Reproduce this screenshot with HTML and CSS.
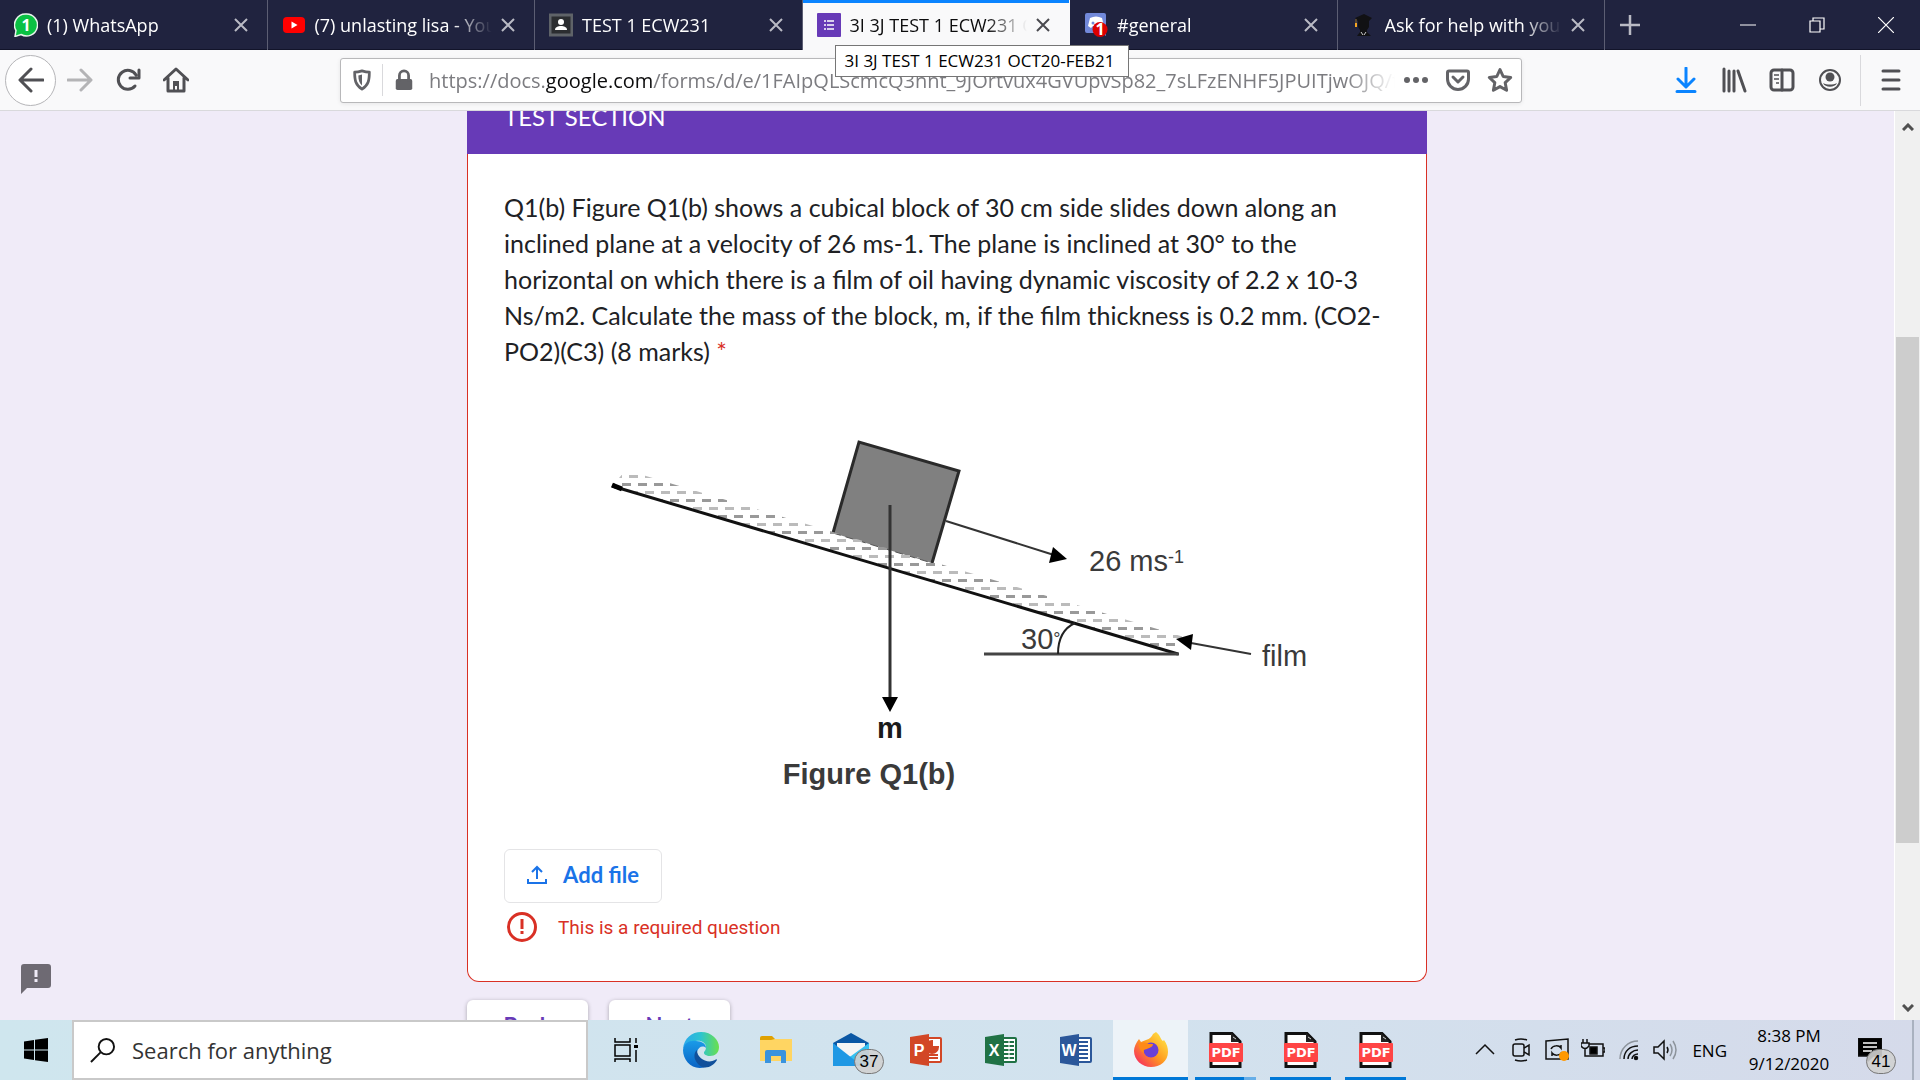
FILE: index.html
```html
<!DOCTYPE html>
<html lang="en">
<head>
    <meta charset="UTF-8">
    <meta name="viewport" content="width=device-width, initial-scale=1.0">
    <title>3I 3J TEST 1 ECW231 OCT20-FEB21</title>
    <link rel="stylesheet" href="styles.css">
</head>
<body>

    <svg class="sprite" width="0" height="0">
        <symbol id="cross" viewBox="0 0 14 14"><path d="M1 1l12 12M13 1L1 13" fill="none" stroke="currentColor" stroke-width="2"/></symbol>
        <symbol id="pdf" viewBox="0 0 36 36">
            <path d="M3 1.500h21l8 8v25H3z" fill="#fff" stroke="#111" stroke-width="3"/>
            <path d="M23 1v9h9z" fill="#222"/>
            <path d="M25 5l3 2" stroke="#ccc"/>
            <rect x="1" y="11" width="34" height="19" rx="1" fill="#ff4545"/>
            <text x="18" y="25" class="pdf-text">PDF</text>
        </symbol>
    </svg>

    <header class="tabs">
        <div class="tab">
            <svg class="tab-icon" viewBox="0 0 24 24">
                <path d="M12 1a11 11 0 1 1-5 20.500L1 23.500l1-6A11 11 0 0 1 12 1z" fill="#0ac143" stroke="#e8f5ec" stroke-width="1.500"/>
                <text x="12" y="18" class="wa-count">1</text>
            </svg>
            <span class="tab-title">(1) WhatsApp</span>
            <button class="tab-close" aria-label="Close tab"><svg><use href="#cross"/></svg></button>
        </div>
        <div class="tab">
            <svg class="tab-icon" viewBox="0 0 24 24">
                <rect x="1" y="4" width="22" height="16" rx="4" fill="#f00"/>
                <path d="M9.500 8.500v7l6-3.500z" fill="#fff"/>
            </svg>
            <span class="tab-title">(7) unlasting lisa - YouTube</span>
            <button class="tab-close" aria-label="Close tab"><svg><use href="#cross"/></svg></button>
        </div>
        <div class="tab">
            <svg class="tab-icon" viewBox="0 0 24 24">
                <rect x="1" y="2" width="22" height="20" fill="#2b2d30" stroke="#5f6368" stroke-width="3"/>
                <circle cx="12" cy="9" r="3" fill="#fff"/>
                <path d="M6 17c0-3 3-4 6-4s6 1 6 4z" fill="#fff"/>
            </svg>
            <span class="tab-title">TEST 1 ECW231</span>
            <button class="tab-close" aria-label="Close tab"><svg><use href="#cross"/></svg></button>
        </div>
        <div class="tab active">
            <svg class="tab-icon" viewBox="0 0 24 24">
                <rect width="24" height="24" rx="1" fill="#673ab7"/>
                <path d="M7 8h2M7 12h2M7 16h2M10 8h7M10 12h7M10 16h7" stroke="#fff" stroke-width="1.500"/>
            </svg>
            <span class="tab-title">3I 3J TEST 1 ECW231 OCT20-FEB21</span>
            <button class="tab-close" aria-label="Close tab"><svg><use href="#cross"/></svg></button>
            <div class="tooltip">3I 3J TEST 1 ECW231 OCT20-FEB21</div>
        </div>
        <div class="tab">
            <svg class="tab-icon" viewBox="0 0 24 24">
                <path d="M3 0h17a2 2 0 0 1 2 2v21l-4-3H3a2 2 0 0 1-2-2V2a2 2 0 0 1 2-2z" fill="#7289da"/>
                <path d="M6 5c4-2 8-2 12 0l2 8-4 2-2-2h-5l-2 2-3-2z" fill="#fff"/>
                <circle cx="9" cy="10" r="1.500" fill="#7289da"/>
                <circle cx="16" cy="16.500" r="7.500" fill="#d00"/>
                <text x="16" y="22" class="dc-count">1</text>
            </svg>
            <span class="tab-title">#general</span>
            <button class="tab-close" aria-label="Close tab"><svg><use href="#cross"/></svg></button>
        </div>
        <div class="tab">
            <svg class="tab-icon" viewBox="0 0 24 24">
                <path d="M3 5l9-4 8 4-3 3v6l-2 3v2l4 4H5l3-4v-2l-2-3V8z" fill="#111114"/>
                <path d="M4 6v4" stroke="#8a6a2a"/>
                <path d="M4 10v4" stroke="#f5a623" stroke-width="2"/>
                <path d="M9 19l2 3M14 19l-2 3" stroke="#ccc"/>
            </svg>
            <span class="tab-title">Ask for help with your homework</span>
            <button class="tab-close" aria-label="Close tab"><svg><use href="#cross"/></svg></button>
        </div>
        <button class="new-tab" aria-label="New tab"><svg viewBox="0 0 22 22"><path d="M11 1v20M1 11h20" stroke="currentColor" stroke-width="2.500"/></svg></button>
        <div class="window-buttons">
            <button aria-label="Minimize"><svg viewBox="0 0 16 16"><path d="M0 8h16" stroke="#fff"/></svg></button>
            <button aria-label="Restore"><svg viewBox="0 0 16 16"><path d="M1 4h10v11H1zM4 4V1h11v11h-4" fill="none" stroke="#fff" stroke-width="1.200"/></svg></button>
            <button aria-label="Close"><svg viewBox="0 0 16 16"><path d="M0 0l16 16M16 0L0 16" stroke="#fff" stroke-width="1.200"/></svg></button>
        </div>
    </header>

    <nav class="toolbar">
        <button class="back" aria-label="Back"><svg viewBox="0 0 26 26"><path d="M25 13H3M13 2L2 13l11 11" class="line"/></svg></button>
        <button class="tool disabled" aria-label="Forward"><svg viewBox="0 0 26 26"><path d="M1 13h22M14 3l10 10-10 10" class="line"/></svg></button>
        <button class="tool" aria-label="Reload"><svg viewBox="0 0 26 26"><path d="M20 19a9.500 9.500 0 1 1 1-11M24 3v8h-9" class="line"/></svg></button>
        <button class="tool" aria-label="Home"><svg viewBox="0 0 26 26"><path d="M1 13L13 2l12 11M5 11v13h16V11" class="line"/><path d="M10 14h6v10h-2v-5h-2v5h-2z" fill="currentColor"/></svg></button>

        <div class="urlbar">
            <button class="shield" aria-label="Tracking protection"><svg viewBox="0 0 24 24"><path d="M12 2c3 1 5 1.500 8 1.500 0 9-1 14-8 18.500C5 17.500 4 12.500 4 3.500 7 3.500 9 3 12 2z" class="line"/><path d="M12 6v12c-3-3-4-6-4-11z" fill="currentColor"/></svg></button>
            <button class="lock" aria-label="Site information"><svg viewBox="0 0 24 24"><rect x="3" y="11" width="18" height="12" rx="2" fill="currentColor"/><path d="M7 12V7a5 5 0 0 1 10 0v5" class="line"/></svg></button>
            <div class="url" role="textbox" aria-label="Address" contenteditable spellcheck="false">https://docs.<b>google.com</b>/forms/d/e/1FAIpQLScmcQ3nnt_9JOrtvux4GVUpvSp82_7sLFzENHF5JPUITjwOJQ/formResponse</div>
            <button aria-label="Page actions"><svg viewBox="0 0 26 26"><circle cx="4" cy="13" r="3" fill="currentColor"/><circle cx="13" cy="13" r="3" fill="currentColor"/><circle cx="22" cy="13" r="3" fill="currentColor"/></svg></button>
            <button aria-label="Save to Pocket"><svg viewBox="0 0 26 26"><path d="M4 4h18a1.500 1.500 0 0 1 1.500 1.500V12a10.500 10.500 0 0 1-21 0V5.500A1.500 1.500 0 0 1 4 4zM8 10l5 5 5-5" class="line"/></svg></button>
            <button aria-label="Bookmark"><svg viewBox="0 0 26 26"><path d="M13 2.500l3.200 7 7.500 1-5.500 5.200 1.400 7.600L13 19.600l-6.600 3.700 1.400-7.600-5.500-5.200 7.500-1z" class="line"/></svg></button>
        </div>

        <button class="tool download" aria-label="Downloads"><svg viewBox="0 0 26 26"><path d="M13 1v18M5 12l8 8 8-8M4 24.500h18" class="line"/></svg></button>
        <button class="tool" aria-label="Library"><svg viewBox="0 0 26 26"><path d="M3 2v22M8 4v20M13 4v20M17 4l7 20" class="line"/></svg></button>
        <button class="tool" aria-label="Sidebars"><svg viewBox="0 0 26 26"><rect x="2" y="3" width="22" height="20" rx="3" class="line"/><path d="M13 3v20" class="line"/><path d="M5 8h5M5 12h5M7 16h3" stroke="currentColor" stroke-width="1.500"/></svg></button>
        <button class="tool" aria-label="Account"><svg viewBox="0 0 26 26"><circle cx="13" cy="13" r="10" fill="none" stroke="currentColor" stroke-width="2"/><circle cx="13" cy="10" r="4.500" fill="currentColor"/><path d="M6 16c4 2 10 2 14 0-2 5-12 5-14 0z" fill="currentColor"/></svg></button>
        <button class="tool menu" aria-label="Menu"><svg viewBox="0 0 26 26"><path d="M5 4h16M5 13h16M5 22h16" class="line"/></svg></button>
    </nav>

    <div class="viewport">
        <main>
            <form>
                <section class="card">
                    <h2>TEST SECTION</h2>
                    <div class="question">
                        <p class="question-text">
                            Q1(b) Figure Q1(b) shows a cubical block of 30 cm side slides down along an<br>
                            inclined plane at a velocity of 26 ms-1. The plane is inclined at 30° to the<br>
                            horizontal on which there is a film of oil having dynamic viscosity of 2.2 x 10-3<br>
                            Ns/m2. Calculate the mass of the block, m, if the film thickness is 0.2 mm. (CO2-<br>
                            PO2)(C3) (8 marks) <span class="required">*</span>
                        </p>

                        <svg class="figure" viewBox="0 0 886 400" role="img" aria-label="Block sliding on an inclined plane">
                            <defs>
                                <pattern id="film" x="6" y="73" width="16" height="16" patternUnits="userSpaceOnUse">
                                    <rect x="0" y="0" width="9" height="3" fill="#999"/>
                                    <rect x="7" y="8" width="9" height="3" fill="#bbb"/>
                                </pattern>
                            </defs>
                            <path d="M355 32l100 29-27 92-99-30z" fill="#808080"/>
                            <path d="M329 123l26-91 100 29-27 92" fill="none" stroke="#2a2a2a" stroke-width="3"/>
                            <path d="M329 123l99 30" stroke="#555" stroke-dasharray="8 5"/>
                            <path d="M122 60l558 167-12 14L108 76z" fill="url(#film)"/>
                            <path d="M108 76l566 168" stroke="#111" stroke-width="3"/>
                            <path d="M108 75l10 4" stroke="#000" stroke-width="5"/>
                            <path d="M386 95v195" stroke="#333" stroke-width="3"/>
                            <path d="M378 287h16l-8 15z"/>
                            <path d="M442 111l108 34" stroke="#333" stroke-width="2"/>
                            <path d="M563 149l-14-12-4 16z"/>
                            <path d="M480 244h195" stroke="#444" stroke-width="3"/>
                            <path d="M554 244c0-16 6-26 17-31" fill="none" stroke="#222" stroke-width="2"/>
                            <path d="M747 244l-60-11" stroke="#333" stroke-width="2"/>
                            <path d="M672 229l17-5-2 16z"/>
                            <text x="585" y="161">26 ms<tspan class="sup" dy="-8">-1</tspan></text>
                            <text x="517" y="239">30<tspan class="sup" dy="-4">°</tspan></text>
                            <text x="758" y="256">film</text>
                            <text x="386" y="328" class="bold dark">m</text>
                            <text x="365" y="374" class="bold">Figure Q1(b)</text>
                        </svg>

                        <button type="button" class="add-file">
                            <svg viewBox="0 0 20 20"><path d="M10 14V3M5 7l5-5 5 5M1 14v4h18v-4" fill="none" stroke="currentColor" stroke-width="2"/></svg>
                            Add file
                        </button>
                        <div class="error">
                            <svg viewBox="0 0 30 30"><circle cx="15" cy="15" r="13.500" fill="none" stroke="currentColor" stroke-width="3"/><path d="M15 7v10M15 19v3" stroke="currentColor" stroke-width="3"/></svg>
                            This is a required question
                        </div>
                    </div>
                </section>
                <div class="form-buttons">
                    <button type="button">Back</button>
                    <button type="button">Next</button>
                </div>
            </form>
            <button class="report" aria-label="Report a problem"><svg viewBox="0 0 30 30"><path d="M3 0h24a3 3 0 0 1 3 3v18a3 3 0 0 1-3 3H6l-6 6V3a3 3 0 0 1 3-3z" fill="#6e6a73"/><path d="M15 6v7M15 15v3" stroke="#f0ebf8" stroke-width="3"/></svg></button>
        </main>
        <div class="scrollbar">
            <svg viewBox="0 0 12 8"><path d="M1 7l5-5 5 5" fill="none" stroke="#505050" stroke-width="3"/></svg>
            <div class="track"><div class="thumb"></div></div>
            <svg viewBox="0 0 12 8"><path d="M1 1l5 5 5-5" fill="none" stroke="#505050" stroke-width="3"/></svg>
        </div>
    </div>

    <footer class="taskbar">
        <button class="start" aria-label="Start"><svg viewBox="0 0 24 24"><path d="M0 3.500l10-1.500v9.500H0zM11 1.800L24 0v11.500H11zM0 12.500h10V22L0 20.500zM11 12.500h13V24l-13-1.800z"/></svg></button>
        <label class="search">
            <svg viewBox="0 0 26 26"><circle cx="17" cy="9" r="8" fill="none" stroke="#111" stroke-width="2"/><path d="M11 15L1 25" stroke="#111" stroke-width="2"/></svg>
            <input type="text" placeholder="Search for anything">
        </label>

        <div class="apps">
            <button class="app" aria-label="Task view"><svg class="small" viewBox="0 0 24 24"><path d="M1 0v4h15V0M1 7h15v11H1zM1 24v-3h15v3M22 0v5M22 12v12" fill="none" stroke="#000" stroke-width="1.500"/><path d="M20 7h4v3h-4z"/></svg></button>
            <button class="app" aria-label="Edge">
                <svg viewBox="0 0 36 36">
                    <defs>
                        <linearGradient id="edge-top"><stop stop-color="#2ba8ed"/><stop offset=".5" stop-color="#2cc4cf"/><stop offset="1" stop-color="#6be04b"/></linearGradient>
                        <linearGradient id="edge-left" x2="0" y2="1"><stop stop-color="#1a9be8"/><stop offset="1" stop-color="#0a63c4"/></linearGradient>
                    </defs>
                    <path d="M0 17C1 6 9 0 18 0c11 0 18 8 18 15 0 6-4 9-9 9-4 0-6-2-6-3 0-2 2-2 2-6 0-4-5-7-10-6C7 9 3 12 0 17z" fill="url(#edge-top)"/>
                    <path d="M0 18C1 11 7 8 13 9c6 0 10 3 10 7-3-3-8-1-9 4-1 6 2 12 8 15-12 4-22-6-22-17z" fill="url(#edge-left)"/>
                    <path d="M14 18c-4 3-4 12 5 17 6 2 12-2 15-7 0-1-1-1-2 0-7 4-18-1-18-10z" fill="#11509b"/>
                </svg>
            </button>
            <button class="app" aria-label="File Explorer">
                <svg viewBox="0 0 36 36"><path d="M2 6a2 2 0 0 1 2-2h10l3 3v5H2z" fill="#e0a100"/><path d="M2 8h11l4-1h17v22H2z" fill="#ffd562"/><path d="M7 31V20a2 2 0 0 1 2-2h17a2 2 0 0 1 2 2v11h-5v-7H13v7z" fill="#3a93dd"/></svg>
            </button>
            <button class="app" aria-label="Mail">
                <svg viewBox="0 0 36 36"><path d="M0 11L18 1l18 10v8H0z" fill="#0b57a4"/><path d="M4 11h28v9L18 28 4 20z" fill="#f5f5f5"/><path d="M36 11v23H0L18 24z" fill="#35c1f1"/><path d="M0 11l29 23H0z" fill="#1f98e4"/></svg>
                <span class="badge">37</span>
            </button>
            <button class="app" aria-label="PowerPoint">
                <svg viewBox="0 0 36 36"><path d="M18 6h14a1 1 0 0 1 1 1v22a1 1 0 0 1-1 1H18z" fill="#fff" stroke="#d24726" stroke-width="2"/><path d="M24 9a6 6 0 1 0 6 6h-6zM20 23h10M20 26h10" fill="#d24726" stroke="#d24726" stroke-width="2"/><path d="M2 5l19-3v32L2 31z" fill="#d24726"/><text x="11" y="24" class="office">P</text></svg>
            </button>
            <button class="app" aria-label="Excel">
                <svg viewBox="0 0 36 36"><path d="M18 6h14a1 1 0 0 1 1 1v22a1 1 0 0 1-1 1H18z" fill="#fff" stroke="#207245" stroke-width="2"/><path d="M21 10h10M21 14h10M21 18h10M21 22h10M21 26h10" stroke="#207245" stroke-width="2"/><path d="M26 8v20" stroke="#fff"/><path d="M2 5l19-3v32L2 31z" fill="#207245"/><text x="11" y="24" class="office">X</text></svg>
            </button>
            <button class="app" aria-label="Word">
                <svg viewBox="0 0 36 36"><path d="M18 6h14a1 1 0 0 1 1 1v22a1 1 0 0 1-1 1H18z" fill="#fff" stroke="#2b579a" stroke-width="2"/><path d="M20 10h10M20 14h10M20 18h10M20 22h10M20 26h10" stroke="#2b579a" stroke-width="2"/><path d="M2 5l19-3v32L2 31z" fill="#2b579a"/><text x="11" y="24" class="office">W</text></svg>
            </button>
            <button class="app current" aria-label="Firefox">
                <svg viewBox="0 0 36 36">
                    <defs><linearGradient id="fox" x1="1" y1="0" x2="0" y2="1"><stop stop-color="#fff44f"/><stop offset=".5" stop-color="#ff9a1f"/><stop offset="1" stop-color="#f5156c"/></linearGradient></defs>
                    <path d="M23 0c5 4 4 7 7 9l1-1c3 4 4 8 4 12 0 9-8 15-17 15S1 28 1 19c0-4 2-8 5-12l2 3 5-2c4-1 6-4 7-6z" fill="url(#fox)"/>
                    <circle cx="18" cy="18" r="7.500" fill="#6b3fd6"/>
                    <path d="M6 12c4-2 7-2 10 0h4c0 3-4 4-6 5-3 1-4 0-3 4-4-2-5-5-5-9z" fill="#ff8a16"/>
                </svg>
            </button>
            <button class="app open more" aria-label="PDF"><svg viewBox="0 0 36 36"><use href="#pdf"/></svg></button>
            <button class="app open" aria-label="PDF"><svg viewBox="0 0 36 36"><use href="#pdf"/></svg></button>
            <button class="app open" aria-label="PDF"><svg viewBox="0 0 36 36"><use href="#pdf"/></svg></button>
        </div>

        <div class="tray">
            <svg viewBox="0 0 24 24"><path d="M3 16l9-9 9 9"/></svg>
            <svg viewBox="0 0 24 24"><rect x="4" y="6" width="11" height="12" rx="2"/><path d="M15 10l5-3v10l-5-3M6 2q6-2 12 0M6 22q6 2 12 0"/></svg>
            <svg viewBox="0 0 24 24"><path d="M1 3l22-2v20H1zM6 11c2-4 8-4 10-1V7M17 14c-2 4-8 4-10 1v3"/><circle cx="19" cy="18" r="5" class="orange"/></svg>
            <svg viewBox="0 0 24 24"><path d="M8 6h14v12H6M22 10h2v4h-2M2 1v4M6 1v4M0 5h8v3q-4 5-8 0zM4 11v7h3"/><path d="M9 9h7v7H9z" fill="#000"/></svg>
            <svg viewBox="0 0 24 24"><path d="M3 21C3 11 11 3 21 3" class="faint"/><path d="M7 21C7 13 13 8 21 8M11 21c0-5 5-9 10-9M15 21c0-3 3-5 6-5"/><circle cx="19" cy="20" r="1.500" fill="#000"/></svg>
            <svg viewBox="0 0 24 24"><path d="M1 9h4l6-6v18l-6-6H1zM14 9q2 3 0 6"/><path d="M17 6q4 6 0 12M20 3q6 9 0 18" class="faint"/></svg>
            <span class="lang">ENG</span>
            <time class="clock">8:38 PM<br>9/12/2020</time>
            <button class="notifications" aria-label="Notifications">
                <svg viewBox="0 0 24 24"><path d="M0 0h24v18h-9l-5 5v-5H0z" class="solid"/><path d="M5 5h14M5 9h14M5 13h9" stroke="#fff"/></svg>
                <span class="badge">41</span>
            </button>
        </div>
        <div class="show-desktop"></div>
    </footer>

</body>
</html>
```
FILE: styles.css
```css
* {
    margin: 0;
    padding: 0;
    box-sizing: border-box;
}

body {
    height: 100vh;
    display: flex;
    flex-direction: column;
    overflow: hidden;
    font-family: "Open Sans", "Noto Sans", sans-serif;
    font-size: 17px;
}

button {
    border: none;
    background: none;
    color: inherit;
    display: flex;
    align-items: center;
    justify-content: center;
}

svg {
    display: block;
    flex-shrink: 0;
}

.sprite {
    position: absolute;
}

/* tabs */

.tabs {
    height: 50px;
    flex-shrink: 0;
    display: flex;
    background-color: #20233f;
    box-shadow: inset 0 -1px #12142a;
    color: #fff;
    font-size: 18px;
}

.tab {
    position: relative;
    flex: 1;
    min-width: 0;
    display: flex;
    align-items: center;
    gap: 9px;
    padding: 0 19px 0 14px;
    border-right: 1px solid #5c5e73;
}

.tab-icon {
    width: 24px;
    height: 24px;
}

.tab-title {
    flex: 1;
    overflow: hidden;
    white-space: nowrap;
    mask-image: linear-gradient(to left, transparent, #000 40px);
}

.tab-close {
    color: #b9bac4;
}

.tab-close svg {
    width: 14px;
    height: 14px;
}

.tab.active {
    background-color: #f9f9fa;
    box-shadow: inset 0 3px #0a84ff;
    border-right-color: #f9f9fa;
    color: #0c0c0d;
}

.active .tab-close {
    color: #4a4a4f;
}

.tooltip {
    position: absolute;
    z-index: 2;
    top: 45px;
    left: 32px;
    min-width: 294px;
    height: 32px;
    line-height: 30px;
    padding: 0 9px;
    white-space: nowrap;
    background-color: #fff;
    border: 1px solid #767676;
    color: #000;
    font-size: 17px;
}

.wa-count,
.dc-count {
    fill: #fff;
    font-size: 16px;
    font-weight: bold;
    text-anchor: middle;
}

.new-tab {
    width: 50px;
    color: #b9bac4;
}

.new-tab svg {
    width: 22px;
}

.window-buttons {
    margin-left: 58px;
    display: flex;
}

.window-buttons button {
    width: 69px;
}

.window-buttons svg {
    width: 16px;
}

/* toolbar */

.toolbar {
    height: 61px;
    flex-shrink: 0;
    display: flex;
    align-items: center;
    padding-left: 5px;
    background-color: #f9f9fa;
    border-bottom: 1px solid #d9d9dc;
    color: #505054;
}

.toolbar svg {
    width: 26px;
    height: 26px;
}

.line {
    fill: none;
    stroke: currentColor;
    stroke-width: 3;
    stroke-linecap: round;
    stroke-linejoin: round;
}

.back {
    width: 51px;
    height: 51px;
    border: 1px solid #b5b5b8;
    border-radius: 50%;
    background-color: #fff;
}

.tool {
    width: 48px;
    height: 48px;
}

.tool.disabled {
    color: #b4b4b6;
}

.tool.download {
    color: #0a84ff;
}

.tool.menu {
    width: 60px;
    height: 51px;
    margin-left: 6px;
    border-left: 1px solid #d9d9dc;
}

.urlbar {
    flex: 1;
    min-width: 0;
    height: 45px;
    margin: 0 140px;
    display: flex;
    align-items: center;
    background-color: #fff;
    border: 1px solid #b8b8ba;
    border-radius: 3px;
    box-shadow: 0 1px 4px rgba(0, 0, 0, .08);
    color: #636367;
}

.urlbar button {
    width: 42px;
    height: 32px;
}

.urlbar .shield {
    border-right: 1px solid #d9d9dc;
}

.shield svg,
.lock svg {
    width: 22px;
    height: 22px;
}

.url {
    flex: 1;
    overflow: hidden;
    white-space: nowrap;
    font-size: 20px;
    color: #7c7c80;
    outline: none;
    margin-left: 4px;
    mask-image: linear-gradient(to left, transparent, #000 50px);
}

.url b {
    font-weight: normal;
    color: #0c0c0d;
}

/* page */

.viewport {
    flex: 1;
    min-height: 0;
    display: flex;
}

main {
    position: relative;
    flex: 1;
    overflow: hidden;
    background-color: #f0ebf8;
}

form {
    width: 960px;
    max-width: 100%;
    margin: 0 auto;
}

.card {
    background-color: #fff;
    border-radius: 0 0 12px 12px;
}

.card h2 {
    height: 43px;
    padding-left: 37px;
    background-color: #673ab7;
    color: #fff;
    font: 400 24px/12px Lato, sans-serif;
}

.question {
    padding: 35px 36px 30px;
    border: 1px solid #d93025;
    border-top: none;
    border-radius: 0 0 12px 12px;
}

.question-text {
    font: 25px/36px Lato, sans-serif;
    color: #202124;
    white-space: nowrap;
}

.required {
    color: #d93025;
}

.figure {
    width: 100%;
    margin: 41px 0 39px;
    font-family: "Liberation Sans", Arial, sans-serif;
    font-size: 29px;
}

.figure text {
    fill: #3a3a3a;
}

.figure .sup {
    font-size: 18px;
}

.figure .bold {
    font-weight: bold;
    text-anchor: middle;
}

.figure .dark {
    fill: #1a1a1a;
}

.add-file {
    width: 158px;
    height: 54px;
    gap: 16px;
    padding-bottom: 2px;
    border: 1px solid #e4e4e6;
    border-radius: 6px;
    font: 700 22px/24px Lato, sans-serif;
    color: #1a73e8;
}

.add-file svg {
    width: 20px;
    height: 20px;
}

.error {
    display: flex;
    align-items: center;
    gap: 21px;
    height: 48px;
    padding-left: 3px;
    font-family: Roboto, sans-serif;
    font-size: 19px;
    color: #d93025;
}

.error svg {
    width: 30px;
    height: 30px;
}

.form-buttons {
    display: flex;
    gap: 21px;
    margin-top: 18px;
}

.form-buttons button {
    width: 121px;
    height: 52px;
    background-color: #fff;
    border-radius: 6px;
    box-shadow: 0 1px 4px rgba(0, 0, 0, .3);
    font: 700 22px/24px Lato, sans-serif;
    color: #673ab7;
}

.report {
    position: absolute;
    left: 21px;
    bottom: 26px;
}

.report svg {
    width: 30px;
    height: 30px;
}

.scrollbar {
    width: 26px;
    display: flex;
    flex-direction: column;
    align-items: center;
    padding: 12px 0 8px;
    background-color: #f0f0f0;
    border-left: 1px solid #fff;
}

.scrollbar svg {
    width: 12px;
    height: 8px;
}

.track {
    flex: 1;
    width: 100%;
    padding: 0 1px;
}

.thumb {
    height: 58%;
    margin-top: 206px;
    background-color: #cdcdcd;
}

/* taskbar */

.taskbar {
    height: 60px;
    flex-shrink: 0;
    display: flex;
    background: linear-gradient(to right, #cfe6ee, #d2e2ee 60%, #d5daea);
}

.start {
    width: 72px;
}

.start svg {
    width: 24px;
}

.search {
    width: 516px;
    display: flex;
    align-items: center;
    gap: 17px;
    padding-left: 16px;
    background-color: #fff;
    border: 2px solid #c9c9c9;
}

.search svg {
    width: 25px;
}

.search input {
    flex: 1;
    min-width: 0;
    border: none;
    outline: none;
    font: 22px "Open Sans", sans-serif;
}

.search input::placeholder {
    color: #333;
}

.apps {
    display: flex;
}

.app {
    position: relative;
    width: 75px;
}

.app svg {
    width: 36px;
    height: 36px;
}

.app .small {
    width: 24px;
    height: 24px;
}

.app.current {
    background-color: #edf3f8;
    border-bottom: 3px solid #0078d7;
    padding-top: 3px;
}

.app.open::after {
    content: "";
    position: absolute;
    left: 7px;
    right: 7px;
    bottom: 0;
    height: 3px;
    background-color: #0078d7;
}

.app.more::after {
    background: linear-gradient(to right, #0078d7 80%, #66aee8 80%);
}

.office {
    fill: #fff;
    font-size: 16px;
    font-weight: bold;
    text-anchor: middle;
}

.pdf-text {
    fill: #fff;
    font: bold 13px "DejaVu Sans", sans-serif;
    text-anchor: middle;
}

.badge {
    position: absolute;
    right: 4px;
    bottom: 6px;
    width: 30px;
    height: 25px;
    line-height: 23px;
    border: 1px solid #777;
    border-radius: 13px;
    background-color: rgba(208, 208, 208, .9);
    color: #000;
    font-size: 17px;
    text-align: center;
}

.tray {
    margin-left: auto;
    display: flex;
    align-items: center;
    gap: 12px;
}

.tray svg {
    width: 24px;
    height: 24px;
    fill: none;
    stroke: #111;
    stroke-width: 1.500;
}

.tray .faint {
    stroke: #8d949c;
}

.tray .orange {
    fill: #ff9800;
    stroke: none;
}

.tray .solid {
    fill: #000;
}

.lang {
    margin-left: 3px;
}

.clock {
    width: 96px;
    margin-left: 2px;
    line-height: 28px;
    text-align: center;
}

.notifications {
    position: relative;
    width: 56px;
    height: 60px;
    margin-left: 3px;
    padding-left: 6px;
    justify-content: flex-start;
}

.notifications .badge {
    right: 12px;
}

.show-desktop {
    width: 8px;
    margin-left: 4px;
    border-left: 2px solid #a9b1c0;
}
```
